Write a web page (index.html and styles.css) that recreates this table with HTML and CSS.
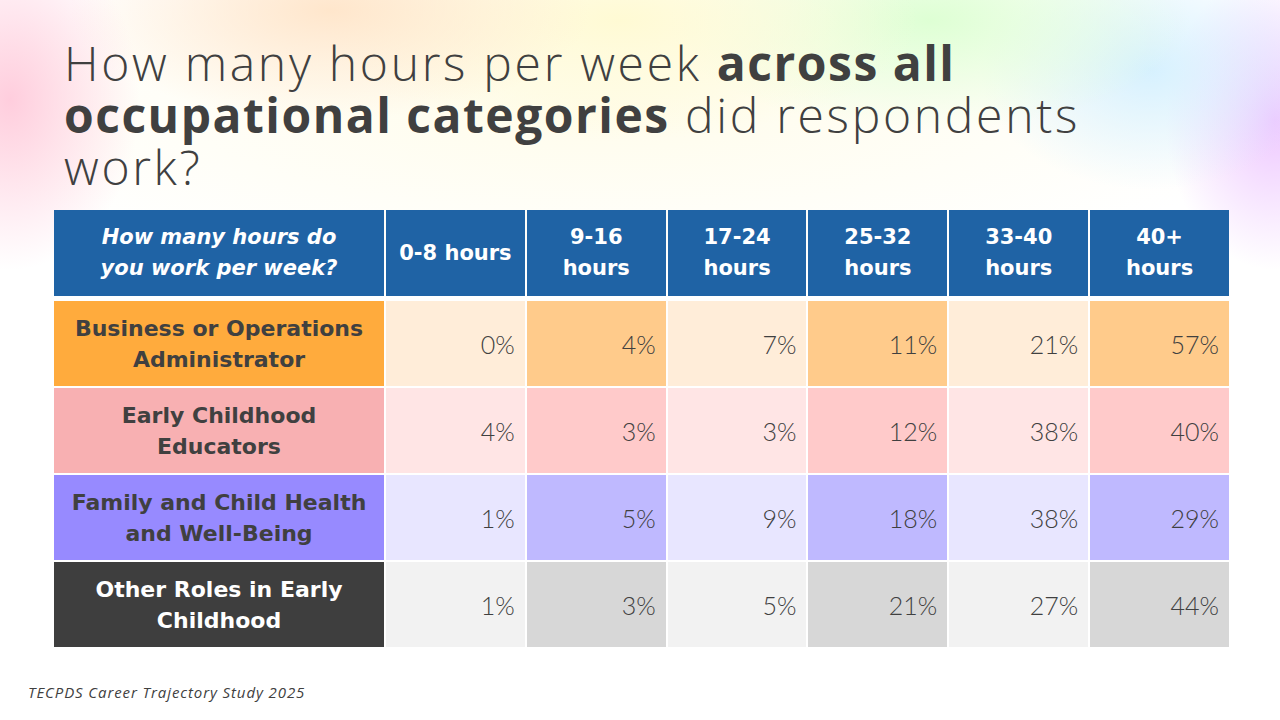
FILE: index.html
```html
<!DOCTYPE html>
<html>
<head>
<meta charset="utf-8">
<link rel="stylesheet" href="styles.css">
</head>
<body>
<div class="slide">
  <div class="bg"></div>
  <h1 class="title">How many hours per week <b>across all</b><br><b>occupational categories</b> did respondents<br>work?</h1>
  <div class="grid">
    <div class="hd hd-q">How many hours do you work per week?</div>
    <div class="hd">0-8 hours</div>
    <div class="hd">9-16<br>hours</div>
    <div class="hd">17-24<br>hours</div>
    <div class="hd">25-32<br>hours</div>
    <div class="hd">33-40<br>hours</div>
    <div class="hd">40+<br>hours</div>

    <div class="lab org">Business or Operations Administrator</div>
    <div class="val org-l">0%</div>
    <div class="val org-d">4%</div>
    <div class="val org-l">7%</div>
    <div class="val org-d">11%</div>
    <div class="val org-l">21%</div>
    <div class="val org-d">57%</div>

    <div class="lab pnk">Early Childhood<br>Educators</div>
    <div class="val pnk-l">4%</div>
    <div class="val pnk-d">3%</div>
    <div class="val pnk-l">3%</div>
    <div class="val pnk-d">12%</div>
    <div class="val pnk-l">38%</div>
    <div class="val pnk-d">40%</div>

    <div class="lab pur">Family and Child Health and Well-Being</div>
    <div class="val pur-l">1%</div>
    <div class="val pur-d">5%</div>
    <div class="val pur-l">9%</div>
    <div class="val pur-d">18%</div>
    <div class="val pur-l">38%</div>
    <div class="val pur-d">29%</div>

    <div class="lab drk">Other Roles in Early Childhood</div>
    <div class="val gry-l">1%</div>
    <div class="val gry-d">3%</div>
    <div class="val gry-l">5%</div>
    <div class="val gry-d">21%</div>
    <div class="val gry-l">27%</div>
    <div class="val gry-d">44%</div>
  </div>
  <div class="foot">TECPDS Career Trajectory Study 2025</div>
</div>
</body>
</html>
```

FILE: styles.css
```css
html, body {
  margin: 0;
  padding: 0;
  background: #ffffff;
}
.slide {
  position: relative;
  width: 1280px;
  height: 720px;
  overflow: hidden;
  background: #ffffff;
  color: #404040;
}
.bg {
  position: absolute;
  left: 0;
  top: 0;
  width: 1280px;
  height: 720px;
  background:
    radial-gradient(ellipse 130px 170px at 10px 100px, rgba(255,200,218,0.9), rgba(255,200,218,0) 100%),
    radial-gradient(ellipse 260px 110px at 330px 10px, rgba(255,226,196,0.85), rgba(255,226,196,0) 100%),
    radial-gradient(ellipse 300px 120px at 620px 20px, rgba(255,250,210,0.95), rgba(255,250,210,0) 100%),
    radial-gradient(ellipse 260px 110px at 930px 20px, rgba(222,255,212,1), rgba(222,255,212,0) 100%),
    radial-gradient(ellipse 170px 120px at 1150px 70px, rgba(212,240,255,0.95), rgba(212,240,255,0) 100%),
    radial-gradient(ellipse 110px 150px at 1275px 120px, rgba(238,200,255,1), rgba(238,200,255,0) 100%),
    radial-gradient(ellipse 700px 170px at 600px 110px, rgba(255,252,232,0.85), rgba(255,252,232,0) 100%);
  pointer-events: none;
}
.title {
  position: relative;
  margin: 0;
  padding: 37px 0 0 64px;
  width: 1180px;
  font-family: "Open Sans", "DejaVu Sans", sans-serif;
  font-weight: 300;
  font-size: 48px;
  line-height: 52px;
  color: #404040;
  letter-spacing: 2.7px;
}
.title b {
  font-weight: 700;
  letter-spacing: 1.5px;
}
.grid {
  position: relative;
  margin: 17px 0 0 54px;
  width: 1175px;
  display: grid;
  grid-template-columns: 330px repeat(6, 1fr);
  grid-template-rows: 89px 85px 85px 85px 85px;
  column-gap: 2px;
  row-gap: 2px;
  font-family: "DejaVu Sans", sans-serif;
  font-size: 21px;
}
.hd {
  background: #1f63a5;
  color: #ffffff;
  font-weight: 700;
  display: flex;
  align-items: center;
  justify-content: center;
  text-align: center;
  line-height: 31px;
  margin-bottom: 3px;
}
.hd-q {
  font-style: italic;
  padding: 0 30px;
}
.lab {
  display: flex;
  align-items: center;
  justify-content: center;
  text-align: center;
  font-weight: 700;
  font-size: 22px;
  line-height: 31px;
  color: #404040;
  padding: 0 6px;
}
.val {
  display: flex;
  align-items: center;
  justify-content: flex-end;
  padding-right: 10px;
  font-family: "Lato", "Open Sans", sans-serif;
  font-weight: 300;
  color: #404040;
  font-size: 25px;
}
.org { background: #ffab3d; }
.org-l { background: #ffedd9; }
.org-d { background: #ffcb8b; }
.pnk { background: #f8b0b2; }
.pnk-l { background: #ffe5e5; }
.pnk-d { background: #ffcaca; }
.pur { background: #978aff; }
.pur-l { background: #e8e6ff; }
.pur-d { background: #bfb9ff; }
.drk { background: #3e3e3e; color: #ffffff; }
.gry-l { background: #f2f2f2; }
.gry-d { background: #d7d7d7; }
.foot {
  position: relative;
  margin: 35px 0 0 28px;
  font-family: "Open Sans", sans-serif;
  font-style: italic;
  font-size: 15px;
  letter-spacing: 0.9px;
  color: #404040;
}
```
